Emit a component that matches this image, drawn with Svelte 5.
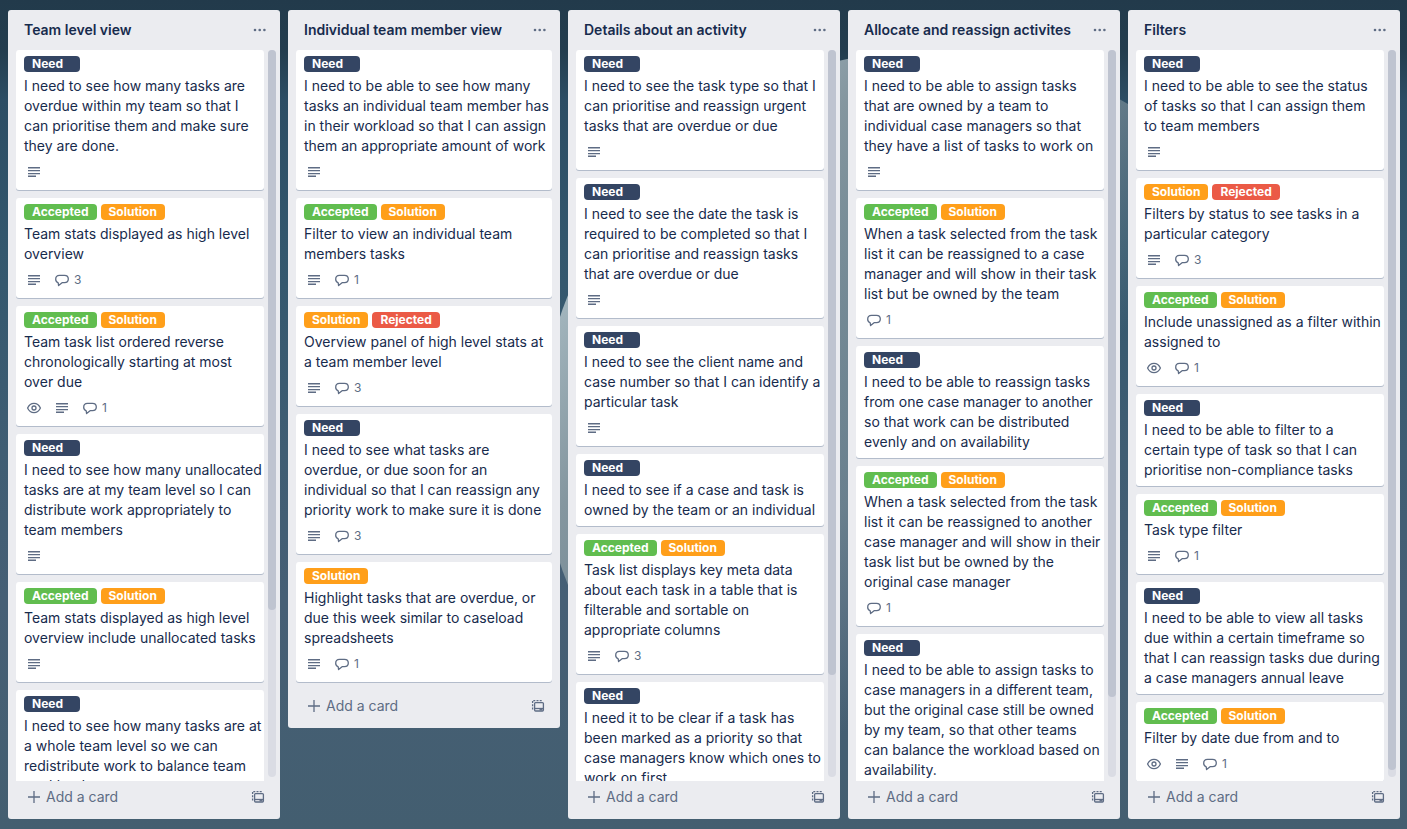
<script>
  const N = 'Need', A = 'Accepted', S = 'Solution', R = 'Rejected';
  const card = (labels, text, badges = '', comments = 0) => ({ labels, text, badges, comments });

  const lists = [
    {
      title: 'Team level view', thumb: 77, cards: [
        card([N], 'I need to see how many tasks are\noverdue within my team so that I\ncan prioritise them and make sure\nthey are done.', 'd'),
        card([A, S], 'Team stats displayed as high level\noverview', 'd', 3),
        card([A, S], 'Team task list ordered reverse\nchronologically starting at most\nover due', 'wd', 1),
        card([N], 'I need to see how many unallocated\ntasks are at my team level so I can\ndistribute work appropriately to\nteam members', 'd'),
        card([A, S], 'Team stats displayed as high level\noverview include unallocated tasks', 'd'),
        card([N], 'I need to see how many tasks are at\na whole team level so we can\nredistribute work to balance team\nworkload', 'd')
      ]
    },
    {
      title: 'Individual team member view', thumb: 0, cards: [
        card([N], 'I need to be able to see how many\ntasks an individual team member has\nin their workload so that I can assign\nthem an appropriate amount of work', 'd'),
        card([A, S], 'Filter to view an individual team\nmembers tasks', 'd', 1),
        card([S, R], 'Overview panel of high level stats at\na team member level', 'd', 3),
        card([N], 'I need to see what tasks are\noverdue, or due soon for an\nindividual so that I can reassign any\npriority work to make sure it is done', 'd', 3),
        card([S], 'Highlight tasks that are overdue, or\ndue this week similar to caseload\nspreadsheets', 'd', 1)
      ]
    },
    {
      title: 'Details about an activity', thumb: 86, cards: [
        card([N], 'I need to see the task type so that I\ncan prioritise and reassign urgent\ntasks that are overdue or due', 'd'),
        card([N], 'I need to see the date the task is\nrequired to be completed so that I\ncan prioritise and reassign tasks\nthat are overdue or due', 'd'),
        card([N], 'I need to see the client name and\ncase number so that I can identify a\nparticular task', 'd'),
        card([N], 'I need to see if a case and task is\nowned by the team or an individual'),
        card([A, S], 'Task list displays key meta data\nabout each task in a table that is\nfilterable and sortable on\nappropriate columns', 'd', 3),
        card([N], 'I need it to be clear if a task has\nbeen marked as a priority so that\ncase managers know which ones to\nwork on first', 'd')
      ]
    },
    {
      title: 'Allocate and reassign activites', thumb: 89, cards: [
        card([N], 'I need to be able to assign tasks\nthat are owned by a team to\nindividual case managers so that\nthey have a list of tasks to work on', 'd'),
        card([A, S], 'When a task selected from the task\nlist it can be reassigned to a case\nmanager and will show in their task\nlist but be owned by the team', '', 1),
        card([N], 'I need to be able to reassign tasks\nfrom one case manager to another\nso that work can be distributed\nevenly and on availability'),
        card([A, S], 'When a task selected from the task\nlist it can be reassigned to another\ncase manager and will show in their\ntask list but be owned by the\noriginal case manager', '', 1),
        card([N], 'I need to be able to assign tasks to\ncase managers in a different team,\nbut the original case still be owned\nby my team, so that other teams\ncan balance the workload based on\navailability.', 'd')
      ]
    },
    {
      title: 'Filters', thumb: 99, cards: [
        card([N], 'I need to be able to see the status\nof tasks so that I can assign them\nto team members', 'd'),
        card([S, R], 'Filters by status to see tasks in a\nparticular category', 'd', 3),
        card([A, S], 'Include unassigned as a filter within\nassigned to', 'w', 1),
        card([N], 'I need to be able to filter to a\ncertain type of task so that I can\nprioritise non-compliance tasks'),
        card([A, S], 'Task type filter', 'd', 1),
        card([N], 'I need to be able to view all tasks\ndue within a certain timeframe so\nthat I can reassign tasks due during\na case managers annual leave'),
        card([A, S], 'Filter by date due from and to', 'wd', 1)
      ]
    }
  ];
</script>

<main class="board">
  {#each lists as list}
    <section class="list">
      <header>
        <h2>{list.title}</h2>
        <button class="icon-button" aria-label="List actions">
          <svg width="16" height="16" viewBox="0 0 16 16" fill="currentColor"><circle cx="3" cy="8" r="1.3" /><circle cx="7.7" cy="8" r="1.3" /><circle cx="12.4" cy="8" r="1.3" /></svg>
        </button>
      </header>
      <div class="body">
        <div class="cards">
          {#each list.cards as c}
            <article class="card">
              <div class="labels">
                {#each c.labels as label}<span class="label {label.toLowerCase()}">{label}</span>{/each}
              </div>
              <p>{c.text}</p>
              {#if c.badges || c.comments}
                <div class="badges">
                  {#if c.badges.includes('w')}
                    <span class="badge"><svg width="16" height="16" viewBox="0 0 16 16" fill="none" stroke="currentColor" stroke-width="1.3"><path d="M1.600 8C3 4.900 5.300 3.300 8 3.300S13 4.900 14.400 8C13 11.100 10.700 12.700 8 12.700S3 11.100 1.600 8Z" /><circle cx="8" cy="8" r="2" /></svg></span>
                  {/if}
                  {#if c.badges.includes('d')}
                    <span class="badge"><svg width="16" height="16" viewBox="0 0 16 16" fill="currentColor"><path d="M2 3h12v1.500H2zM2 6h12v1.300H2zM2 9h12v1.300H2zM2 11.500h8V13H2z" /></svg></span>
                  {/if}
                  {#if c.comments}
                    <span class="badge"><svg width="16" height="16" viewBox="0 0 16 16" fill="none" stroke="currentColor" stroke-width="1.3" stroke-linejoin="round"><path d="M4.200 10.800C2.600 10.200 1.700 9 1.700 7.300 1.700 5 3.300 3.400 5.500 3.400H10.500C12.700 3.400 14.300 4.900 14.300 7S12.700 10.600 10.500 10.600H8.400L4.600 13.600Z" /></svg><span class="count">{c.comments}</span></span>
                  {/if}
                </div>
              {/if}
            </article>
          {/each}
        </div>
        {#if list.thumb}
          <div class="track"><div class="thumb" style="height: {list.thumb}%"></div></div>
        {/if}
      </div>
      <footer>
        <button class="add"><svg width="16" height="16" viewBox="0 0 16 16" stroke="currentColor" stroke-width="1.3"><path d="M8 2V14M2 8H14" /></svg>Add a card</button>
        <button class="icon-button" aria-label="Create from template">
          <svg width="16" height="16" viewBox="0 0 16 16" fill="none" stroke="currentColor" stroke-width="1.3"><path d="M2.600 11.500V2.600H12.500" stroke-dasharray="2 1.200" /><rect x="4.600" y="4.600" width="8.800" height="8.400" rx="1" /><path d="M4.600 10.500H13.400" /><path d="M9.500 11.700H12.500" /></svg>
        </button>
      </footer>
    </section>
  {/each}
</main>

<style>
  :global(body) {
    margin: 0;
  }
  .board {
    position: relative;
    isolation: isolate;
    overflow: hidden;
    box-sizing: border-box;
    height: 100vh;
    padding: 10px 7px 10px 8px;
    display: grid;
    grid-template-columns: repeat(5, minmax(0, 1fr));
    gap: 8px;
    align-items: start;
    font-family: Inter, "Liberation Sans", sans-serif;
    font-size: 14px;
    line-height: 20px;
    color: #172b4d;
    background: linear-gradient(#223a4b 0, #233d4e 50px, #2c4d64 100px, #33576d 250px, #3f5d73 450px, #465f75 600px, #435e70 829px);
  }
  /* The moon in the board's wallpaper, lit from the left. */
  .board::before {
    content: "";
    position: absolute;
    z-index: -1;
    left: 540px;
    top: 50px;
    width: 780px;
    height: 780px;
    border-radius: 50%;
    background: linear-gradient(125deg, #a3b6be 160px, #84969f 280px, #84969fdd 350px, #84969f99 510px, #84969f00 640px);
  }
  .list {
    box-sizing: border-box;
    max-height: calc(100vh - 20px);
    display: flex;
    flex-direction: column;
    background: #ebecf0;
    border-radius: 3px;
  }
  header {
    display: flex;
    align-items: center;
    justify-content: space-between;
    height: 40px;
    flex: none;
    padding: 0 12px 0 16px;
  }
  h2 {
    margin: 0;
    font-size: 14px;
    font-weight: 600;
    line-height: 20px;
    white-space: nowrap;
  }
  button {
    border: 0;
    padding: 0;
    background: none;
    font: inherit;
    color: #5e6c84;
    cursor: pointer;
  }
  svg {
    display: block;
    flex: none;
  }
  .body {
    display: flex;
    gap: 4px;
    min-height: 0;
    padding: 0 4px 0 8px;
  }
  .cards {
    flex: 1;
    min-width: 0;
    overflow: hidden;
  }
  .cards:last-child {
    padding-right: 4px;
  }
  .card {
    padding: 6px 8px 2px;
    margin-bottom: 8px;
    background: #fff;
    border-radius: 3px;
    box-shadow: 0 1px 0 #b3bccb;
  }
  .labels {
    display: flex;
    gap: 4px;
    margin-bottom: 4px;
  }
  .label {
    box-sizing: border-box;
    height: 16px;
    min-width: 56px;
    padding: 0 8px;
    border-radius: 4px;
    color: #fff;
    font-size: 12px;
    font-weight: 700;
    line-height: 16px;
  }
  .need { background: #344563; }
  .accepted { background: #61bd4f; }
  .solution { background: #ff9f1a; }
  .rejected { background: #eb5a46; }
  p {
    margin: 0 0 4px;
    white-space: pre;
  }
  .badges {
    display: flex;
    gap: 8px;
    padding: 2px 0 6px;
    color: #5e6c84;
  }
  .badge {
    box-sizing: border-box;
    display: flex;
    align-items: center;
    height: 20px;
    padding: 0 2px;
    font-size: 12px;
  }
  .count {
    padding: 0 4px;
  }
  .track {
    width: 8px;
    margin-bottom: 4px;
    border-radius: 4px;
    background: #dadce4;
  }
  .thumb {
    border-radius: 4px;
    background: #bfc4d0;
  }
  footer {
    flex: none;
    display: flex;
    align-items: center;
    justify-content: space-between;
    height: 32px;
    padding: 0 14px 6px 18px;
  }
  .add {
    display: flex;
    align-items: center;
    gap: 4px;
  }
</style>
